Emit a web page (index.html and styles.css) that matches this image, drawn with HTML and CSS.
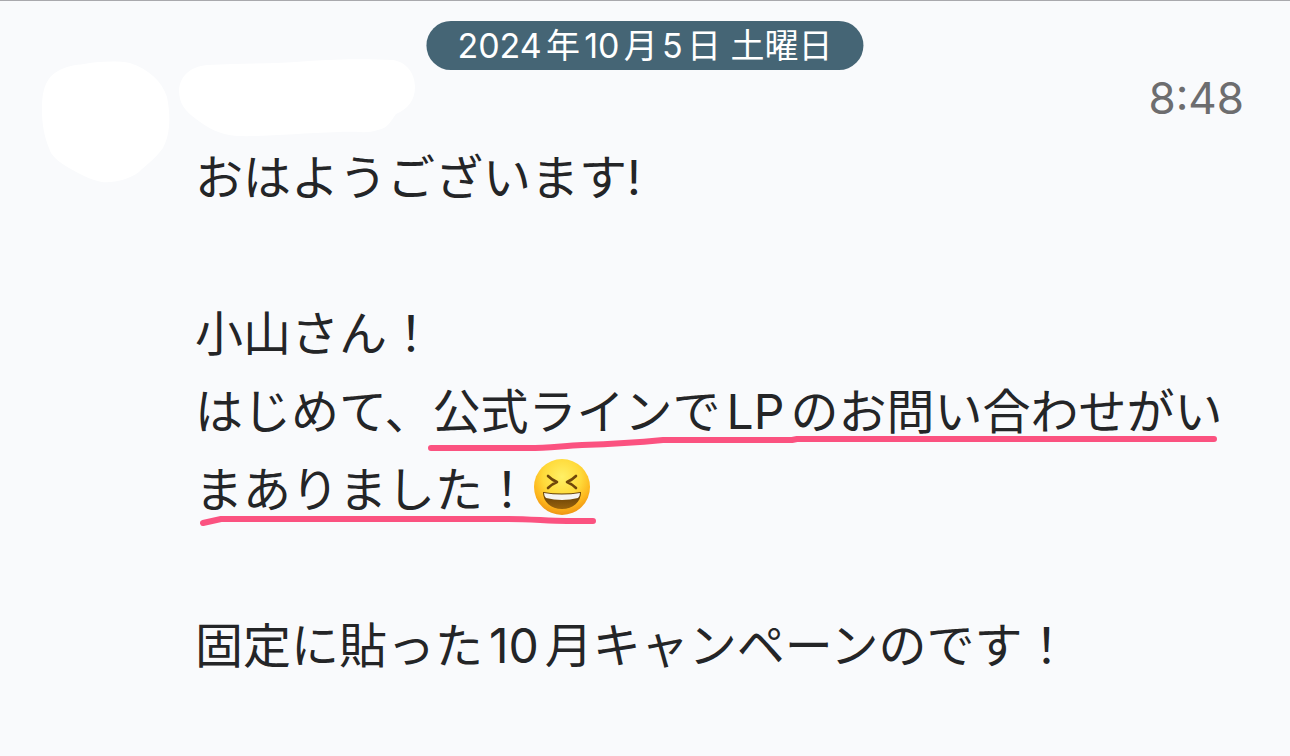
FILE: index.html
```
<!DOCTYPE html>
<html lang="ja">
<head>
    <meta charset="UTF-8">
    <meta name="viewport" content="width=device-width, initial-scale=1.0">
    <title>チャット</title>
    <link rel="stylesheet" href="styles.css">
</head>
<body>
    <main class="chat">
        <time class="date-badge" datetime="2024-10-05">2024年10月5日 土曜日</time>

        <article class="message">
            <svg class="avatar" viewBox="0 0 128 122" aria-hidden="true">
                <path d="M42 3C60 0 76 0 88 2C106 8 120 20 125 36C129 56 128 74 121 87C114 97 104 104 97 111C86 119 72 122 60 121C48 119 38 113 27 107C17 101 9 95 7 87C2 75 0 62 0 50C0 32 2 18 16 10C25 5 33 4 42 3Z"/>
            </svg>

            <div class="content">
                <header class="message-header">
                    <svg class="name" viewBox="0 0 236 79" aria-hidden="true">
                        <path d="M28 6C70 4 100 5 130 2C160 0 190 0 214 1C227 3 236 14 236 28C236 41 229 50 217 55C212 62 209 69 199 71C188 75 178 72 160 73C120 74 85 78 58 77C40 76 28 68 17 60C5 51 0 44 0 31C1 17 11 8 28 6Z"/>
                    </svg>
                    <time class="time" datetime="08:48">8:48</time>
                </header>

                <div class="text">
                    <p>おはようございます!</p>
                    <p class="blank"></p>
                    <p>小山さん！</p>
                    <p>はじめて、公式ラインでLPのお問い合わせがいまありました！<svg class="emoji" viewBox="0 0 60 60" role="img" aria-label="😆">
                        <defs>
                            <radialGradient id="face" cx="0.5" cy="0.32" r="0.68">
                                <stop offset="0" stop-color="#fff066"/>
                                <stop offset="0.5" stop-color="#ffda3a"/>
                                <stop offset="0.8" stop-color="#fdb51c"/>
                                <stop offset="1" stop-color="#ee9414"/>
                            </radialGradient>
                            <linearGradient id="mouth" x1="0" y1="0" x2="0" y2="1">
                                <stop offset="0" stop-color="#5c3906"/>
                                <stop offset="1" stop-color="#9a640c"/>
                            </linearGradient>
                        </defs>
                        <circle cx="31" cy="30" r="28" fill="url(#face)"/>
                        <path d="M17 19Q21 23 26 25Q21 27 17 31M45 19Q41 23 36 25Q41 27 45 31" fill="none" stroke="#70470a" stroke-width="2.6" stroke-linecap="round" stroke-linejoin="round"/>
                        <path d="M12 35Q31 38 50 35C50 45 42 52 31 52C20 52 12 45 12 35Z" fill="url(#mouth)"/>
                        <path d="M13 36Q31 39 49 36Q49 39 47 41Q31 45 15 41Q13 39 13 36Z" fill="#f6f4f1"/>
                    </svg></p>
                    <p class="blank"></p>
                    <p>固定に貼った10月キャンペーンのです！</p>

                    <!-- marker lines drawn over the text -->
                    <svg class="marker" viewBox="0 0 1050 400" aria-hidden="true">
                        <path d="M236 309H334C352 309 367 307 387 306C417 305 447 303 468 301H597L602 300H1019"/>
                        <path d="M8 384L26 380H312C337 380 352 382 372 382H398"/>
                    </svg>
                </div>
            </div>
        </article>
    </main>
</body>
</html>
```
FILE: styles.css
```
body {
    margin: 0;
    background-color: #f9fafc;
    color: #242527;
    font-family: Inter, "Noto Sans CJK JP", sans-serif;
}

.chat {
    position: relative;
    border-top: 1px solid #a9a9ad;
}

/* floating date, stays above the messages */
.date-badge {
    position: absolute;
    top: 20px;
    left: 50%;
    transform: translateX(-50%);
    padding: 0 31px;
    border-radius: 25px;
    background-color: #456575;
    color: #fff;
    font-size: 34px;
    line-height: 49px;
    white-space: nowrap;
    text-autospace: normal;
}

.message {
    display: flex;
    align-items: flex-start;
    gap: 25px;
    padding: 56px 46px 72px 42px;
}

.avatar {
    flex: none;
    width: 128px;
    height: 122px;
    margin-top: 4px;
    fill: #fff;
}

.content {
    flex: 1;
    min-width: 0;
}

.message-header {
    display: flex;
    justify-content: space-between;
    align-items: center;
    height: 82px;
}

.name {
    width: 236px;
    height: 79px;
    margin-left: -16px;
    fill: #fff;
}

.time {
    color: #6d6d6f;
    font-size: 44px;
}

.text {
    position: relative;
    font-size: 48px;
    line-height: 78px;
    text-autospace: normal;
}

.text p {
    margin: 0;
}

.text .blank {
    height: 78px;
}

.emoji {
    width: 60px;
    height: 60px;
    vertical-align: -10px;
}

.marker {
    position: absolute;
    top: 0;
    left: 0;
    width: 1050px;
    height: 400px;
    fill: none;
    stroke: #fb5280;
    stroke-width: 6;
    stroke-linecap: round;
    stroke-linejoin: round;
    pointer-events: none;
}
```
